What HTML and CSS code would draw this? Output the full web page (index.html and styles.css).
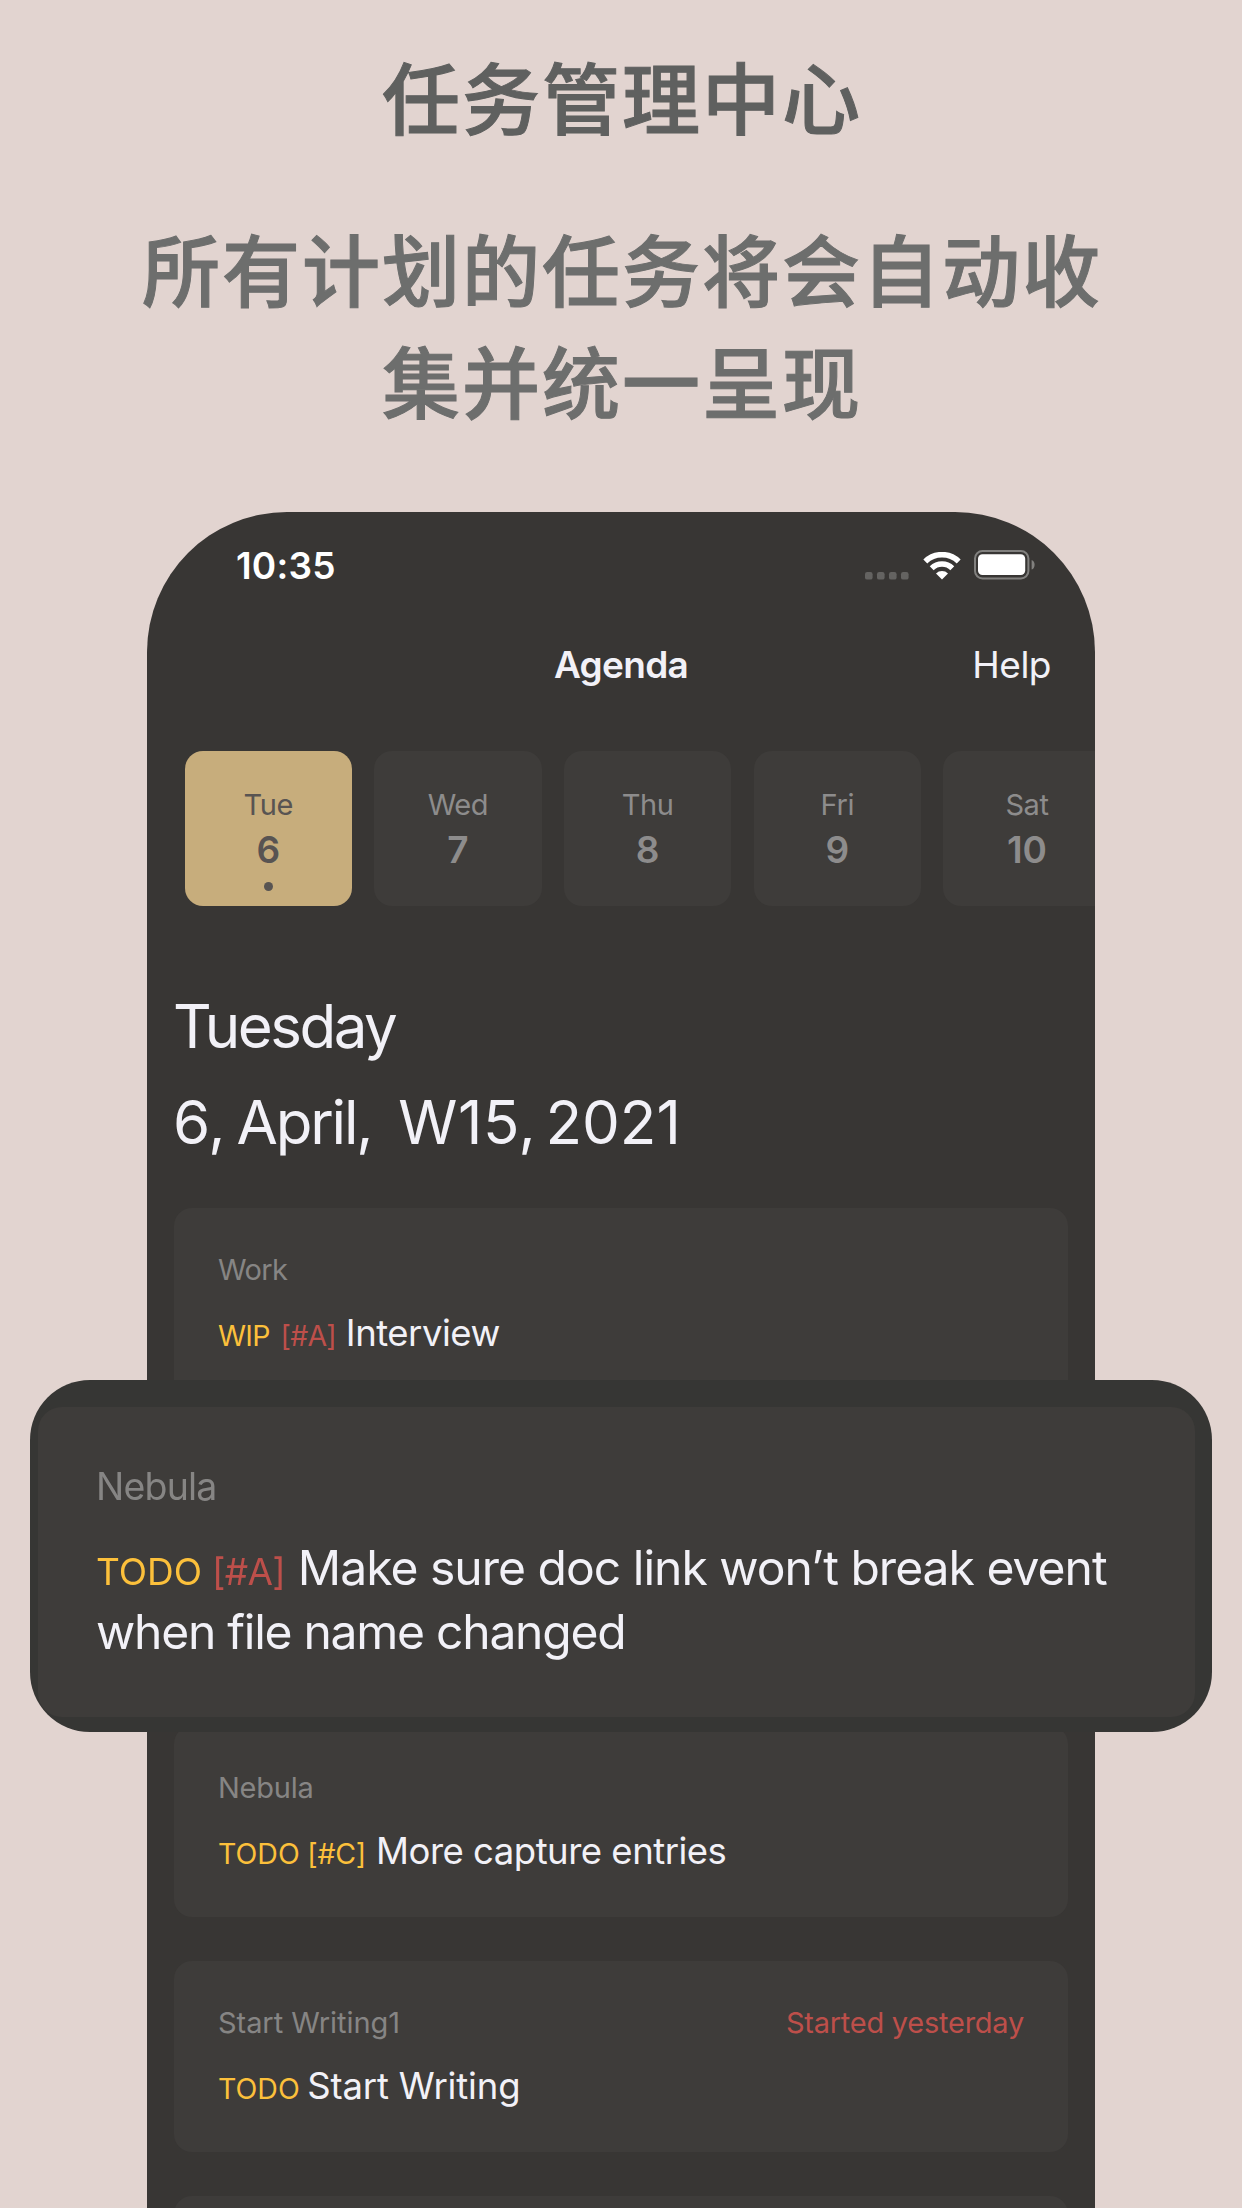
FILE: index.html
```html
<!DOCTYPE html>
<html lang="zh-CN">
<head>
<meta charset="utf-8">
<title>任务管理中心</title>
<link rel="stylesheet" href="styles.css">
</head>
<body>
<main class="poster">
  <header class="headline">
    <h1 class="headline-title">任务管理中心</h1>
    <p class="headline-text">所有计划的任务将会自动收<br>集并统一呈现</p>
  </header>

  <section class="phone">
    <div class="status-bar">
      <span class="clock">10:35</span>
      <div class="status-icons">
        <svg class="icon-signal" width="44" height="8" viewBox="0 0 44 8"><g fill="#646361"><rect x="0" width="7.6" height="7.6" rx="2.2"/><rect x="12" width="7.6" height="7.6" rx="2.2"/><rect x="24" width="7.6" height="7.6" rx="2.2"/><rect x="36" width="7.6" height="7.6" rx="2.2"/></g></svg>
        <svg class="icon-wifi" width="38" height="28" viewBox="0 0 38 28"><g fill="none" stroke="#fff" stroke-width="5.6"><path d="M2.3 9.4a24 24 0 0 1 33.4 0"/><path d="M8.7 16.2a14.8 14.8 0 0 1 20.6 0"/></g><path d="M19 27.5l-6-6a8.6 8.6 0 0 1 12 0z" fill="#fff"/></svg>
        <svg class="icon-battery" width="62" height="30" viewBox="0 0 62 30"><rect x="1" y="1" width="53.4" height="27.4" rx="7.5" fill="none" stroke="#81807e" stroke-width="2"/><rect x="4" y="4.2" width="47.2" height="20.8" rx="4.5" fill="#fff"/><path d="M57.6 10c4 1.2 4 8.4 0 9.6z" fill="#81807e"/></svg>
      </div>
    </div>

    <nav class="nav-bar">
      <h2 class="nav-title">Agenda</h2>
      <a class="nav-help">Help</a>
    </nav>

    <div class="days">
      <div class="day day-active"><span class="day-name">Tue</span><span class="day-number">6</span><i class="day-dot"></i></div>
      <div class="day"><span class="day-name">Wed</span><span class="day-number">7</span></div>
      <div class="day"><span class="day-name">Thu</span><span class="day-number">8</span></div>
      <div class="day"><span class="day-name">Fri</span><span class="day-number">9</span></div>
      <div class="day"><span class="day-name">Sat</span><span class="day-number">10</span></div>
    </div>

    <div class="date">
      <span class="date-weekday">Tuesday</span>
      <span class="date-full"><span class="date-day">6,</span><span class="date-month">April,</span><span class="date-week">W15,</span><span>2021</span></span>
    </div>

    <div class="cards">
      <article class="card">
        <div class="card-meta"><span class="file-work">Work</span></div>
        <p class="card-task"><span class="state state-wip">WIP</span><span class="priority">[#A]</span><span>Interview</span></p>
      </article>
      <article class="card card-tall"></article>
      <article class="card">
        <div class="card-meta"><span>Nebula</span></div>
        <p class="card-task"><span class="state">TODO</span><span class="priority priority-c">[#C]</span><span>More capture entries</span></p>
      </article>
      <article class="card">
        <div class="card-meta"><span class="file-writing">Start Writing1</span><span class="late">Started yesterday</span></div>
        <p class="card-task"><span class="state">TODO</span><span class="task-wide">Start Writing</span></p>
      </article>
      <article class="card"></article>
    </div>
  </section>

  <aside class="spotlight">
    <div class="spotlight-card">
      <div class="spotlight-meta">Nebula</div>
      <p class="spotlight-task"><span class="state">TODO</span><span class="priority">[#A]</span><span>Make sure doc link won’t break event</span></p>
      <p class="spotlight-task spotlight-rest">when file name changed</p>
    </div>
  </aside>
</main>
</body>
</html>
```
FILE: styles.css
```css
* { box-sizing: border-box; }

body {
  margin: 0;
  background: #e2d4d0;
  font-family: Inter, "Liberation Sans", sans-serif;
  color: #f2f1f7;
}

h1, h2, p { margin: 0; font-weight: 400; }

.poster {
  position: relative;
  width: 1242px;
  height: 2208px;
  overflow: hidden;
  white-space: nowrap;
}

.headline {
  height: 512px;
  padding: 39px 0 0 2px;
  text-align: center;
  font-family: "Noto Sans CJK SC", sans-serif;
}

.headline-title,
.headline-text {
  font-size: 78px;
  font-weight: 500;
  letter-spacing: 2px;
  line-height: 112px;
  -webkit-text-stroke: 1px currentColor;
}

.headline-title { color: #5f605f; }
.headline-text { margin-top: 60px; color: #6d6e6d; }

.phone {
  width: 948px;
  height: 1840px;
  margin: 0 auto;
  padding-top: 30px;
  overflow: hidden;
  border-radius: 140px 140px 0 0;
  background: #383634;
}

.status-bar {
  display: flex;
  justify-content: space-between;
  height: 48px;
  padding: 0 59px 0 89px;
  line-height: 48px;
}

.clock { font-size: 37px; font-weight: 600; letter-spacing: 0.2px; color: #fff; }

.status-icons { display: flex; gap: 13.5px; align-items: flex-end; padding-bottom: 10px; }

.icon-signal, .icon-wifi, .icon-battery { display: block; }

.nav-bar {
  display: grid;
  grid-template-columns: 1fr auto 1fr;
  margin-top: 50px;
  padding: 0 44px;
  font-size: 37px;
  line-height: 50px;
}

.nav-title { grid-column: 2; font-size: 37px; font-weight: 600; letter-spacing: -0.7px; }
.nav-help { justify-self: end; letter-spacing: -0.5px; }

.days {
  display: flex;
  gap: 22.2px;
  margin: 61px 0 0 37.5px;
}

.day {
  display: flex;
  flex: 0 0 167.5px;
  flex-direction: column;
  align-items: center;
  height: 155px;
  padding-top: 36px;
  border-radius: 18px;
  background: #3e3c3a;
  color: #8d8c8c;
}

.day-name { font-size: 29px; line-height: 36px; letter-spacing: -0.4px; }
.day-number { font-size: 37px; font-weight: 600; line-height: 44px; margin-top: 5px; }
.day-active { background: #c7ad7c; color: #585452; }
.day-dot { width: 9px; height: 9px; margin-top: 10px; border-radius: 50%; background: #585452; }

.date { display: flex; flex-direction: column; padding: 84px 26px 0; font-size: 60px; line-height: 72px; }
.date-weekday { letter-spacing: -2.5px; }
.date-full { display: flex; margin-top: 24px; }
.date-day { margin-right: 11px; }
.date-month { margin-right: 27px; letter-spacing: -2.2px; }
.date-week { margin-right: 9px; letter-spacing: 0.6px; }

.cards { display: flex; flex-direction: column; gap: 44px; padding: 50px 27px 0; }

.card {
  flex: none;
  height: 191px;
  padding: 44px 44px 0;
  border-radius: 18px;
  background: #3e3c3a;
}

.card-tall { height: 239px; }

.card-meta { display: flex; justify-content: space-between; font-size: 29px; line-height: 36px; letter-spacing: -0.25px; color: #868584; }
.file-work { letter-spacing: -0.6px; }
.file-writing { letter-spacing: -0.05px; }
.card-task { display: flex; align-items: baseline; margin-top: 21px; font-size: 36.5px; line-height: 48px; letter-spacing: -0.5px; }
.state { margin-right: 7.5px; font-size: 28.5px; letter-spacing: 0; color: #fcc03b; }
.state-wip { margin-right: 11px; letter-spacing: -0.8px; }
.priority { margin-right: 10px; font-size: 28.5px; letter-spacing: -0.8px; color: #bd4f4a; }
.priority-c { letter-spacing: -0.2px; color: #fcc03b; }
.task-wide { letter-spacing: -0.15px; }
.late { color: #bd4f4a; }

.spotlight {
  position: absolute;
  top: 1380px;
  left: 30px;
  width: 1182px;
  height: 352px;
  padding: 27px 17px 15px 8px;
  border-radius: 60px;
  background: #363634;
}

.spotlight-card { height: 310px; padding: 56px 58px; border-radius: 24px; background: #3e3c3a; }
.spotlight-meta, .spotlight-task { filter: blur(0.6px); }
.spotlight-meta { font-size: 37.5px; line-height: 48px; letter-spacing: -0.8px; color: #868584; }
.spotlight-task { display: flex; align-items: baseline; font-size: 48px; line-height: 62px; letter-spacing: -0.98px; }
.spotlight-meta + .spotlight-task { margin-top: 26px; }
.spotlight-task.spotlight-rest { line-height: 57px; letter-spacing: -1.25px; }
.spotlight-task .state, .spotlight-task .priority { font-size: 37px; }
.spotlight-task .state { margin-right: 10px; }
.spotlight-task .priority { margin-right: 13px; }
```
